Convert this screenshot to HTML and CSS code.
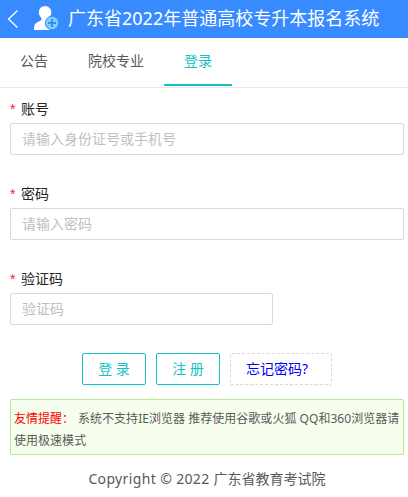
FILE: index.html
```html
<!DOCTYPE html>
<html lang="zh-CN">
<head>
<meta charset="utf-8">
<title>广东省2022年普通高校专升本报名系统</title>
<link rel="stylesheet" href="styles.css">
</head>
<body>
<header class="header">
  <svg class="back" width="12" height="20" viewBox="0 0 12 20"><path d="M10.500 1.500 1.500 10l9 8.500" fill="none" stroke="#fff" stroke-width="1.300"/></svg>
  <svg class="user" width="26" height="26" viewBox="0 0 26 26">
    <path d="M11 0a6.200 6.200 0 0 1 6.300 6.200c0 2.700-1.300 4.200-2.300 5.500-.8 1.300.2 2.300 2 3.300L16 24H0c0-5 .8-6.500 4-8 3-1.400 4.300-2.200 3.200-4.200C6 10.300 4.800 9 4.800 6.200A6.200 6.200 0 0 1 11 0Z" fill="#fff"/>
    <circle cx="18" cy="17" r="7.200" fill="#388bff"/>
    <circle cx="18" cy="17" r="6.200" fill="#7fd0ff"/>
    <path d="M18 13v8M14 17h8" stroke="#388bff" stroke-width="2"/>
  </svg>
  <h1 class="title">广东省2022年普通高校专升本报名系统</h1>
</header>
<nav class="tabs">
  <a class="tab">公告</a>
  <a class="tab">院校专业</a>
  <a class="tab active">登录</a>
</nav>
<form class="form">
  <div class="field">
    <label class="label" for="account">账号</label>
    <input class="input" id="account" type="text" placeholder="请输入身份证号或手机号">
  </div>
  <div class="field">
    <label class="label" for="password">密码</label>
    <input class="input" id="password" type="password" placeholder="请输入密码">
  </div>
  <div class="field">
    <label class="label" for="captcha">验证码</label>
    <input class="input captcha" id="captcha" type="text" placeholder="验证码">
  </div>
  <div class="actions">
    <button class="button" type="button">登 录</button>
    <button class="button" type="button">注 册</button>
    <button class="button forgot" type="button">忘记密码?</button>
  </div>
</form>
<div class="notice">
  <span class="warn">友情提醒：</span>
  <span>系统不支持IE浏览器 推荐使用谷歌或火狐 QQ和360浏览器请</span>
  <span class="rest">使用极速模式</span>
</div>
<footer class="footer"><span class="copy">Copyright © 2022 </span>广东省教育考试院</footer>
</body>
</html>
```
FILE: styles.css
```css
* { box-sizing: border-box; }
body {
  margin: 0;
  height: 497px;
  overflow: hidden;
  background: #fff;
  color: #595959;
  font: 14px/22px "Noto Sans", "Noto Sans CJK SC", sans-serif;
}
.header {
  display: flex;
  align-items: center;
  height: 38px;
  padding-left: 7px;
  background: #388bff;
  color: #fff;
}
.back { margin-right: 15px; }
.user { margin-right: 8px; }
.title {
  margin: 0;
  font-size: 18px;
  font-weight: 400;
  line-height: 36px;
  height: 38px;
  white-space: nowrap;
}
.tabs {
  display: flex;
  height: 50px;
  border-bottom: 1px solid #e8e8e8;
}
.tab {
  height: 48px;
  padding: 0 20px;
  line-height: 46px;
}
.tab.active {
  color: #13c2c2;
  border-bottom: 2px solid #13c2c2;
}
.form { padding: 10px 4px 0 10px; }
.field { height: 85px; }
.label {
  display: block;
  height: 25px;
  color: #262626;
  line-height: 22px;
}
.label::before {
  content: "*";
  display: inline-block;
  width: 11px;
  color: #f5222d;
  font: 14px/1 "Liberation Sans", sans-serif;
}
.input {
  display: block;
  width: 100%;
  height: 32px;
  padding: 0 11px 2px;
  border: 1px solid #d9d9d9;
  border-radius: 2px;
  background: #fff;
  color: #262626;
  font: inherit;
}
.input::placeholder { color: #bfbfbf; opacity: 1; }
.captcha { width: 263px; }
.actions {
  display: flex;
  justify-content: center;
  gap: 10px;
}
.button {
  width: 64px;
  height: 32px;
  padding: 0;
  border: 1px solid #13c2c2;
  border-radius: 2px;
  background: #fff;
  box-shadow: 0 2px 0 rgba(0, 0, 0, .015);
  color: #13c2c2;
  font: inherit;
}
.forgot {
  width: 102px;
  padding-left: 15px;
  border: 1px dashed #d9d9d9;
  color: #00f;
  text-align: left;
}
.notice {
  display: grid;
  grid-template-columns: 60px 1fr;
  column-gap: 4px;
  align-content: start;
  height: 56px;
  margin: 14px 4px 0 10px;
  padding: 8px 3px 0;
  border: 1px solid #b7eb8f;
  border-radius: 2px;
  background: #f6ffed;
  font-size: 12px;
  letter-spacing: .03px;
  white-space: nowrap;
}
.warn { color: #f00; letter-spacing: 0; }
.rest { grid-column: 1 / -1; }
.footer {
  margin-top: 13px;
  padding-left: 6px;
  text-align: center;
}
.copy { letter-spacing: .36px; }
```
